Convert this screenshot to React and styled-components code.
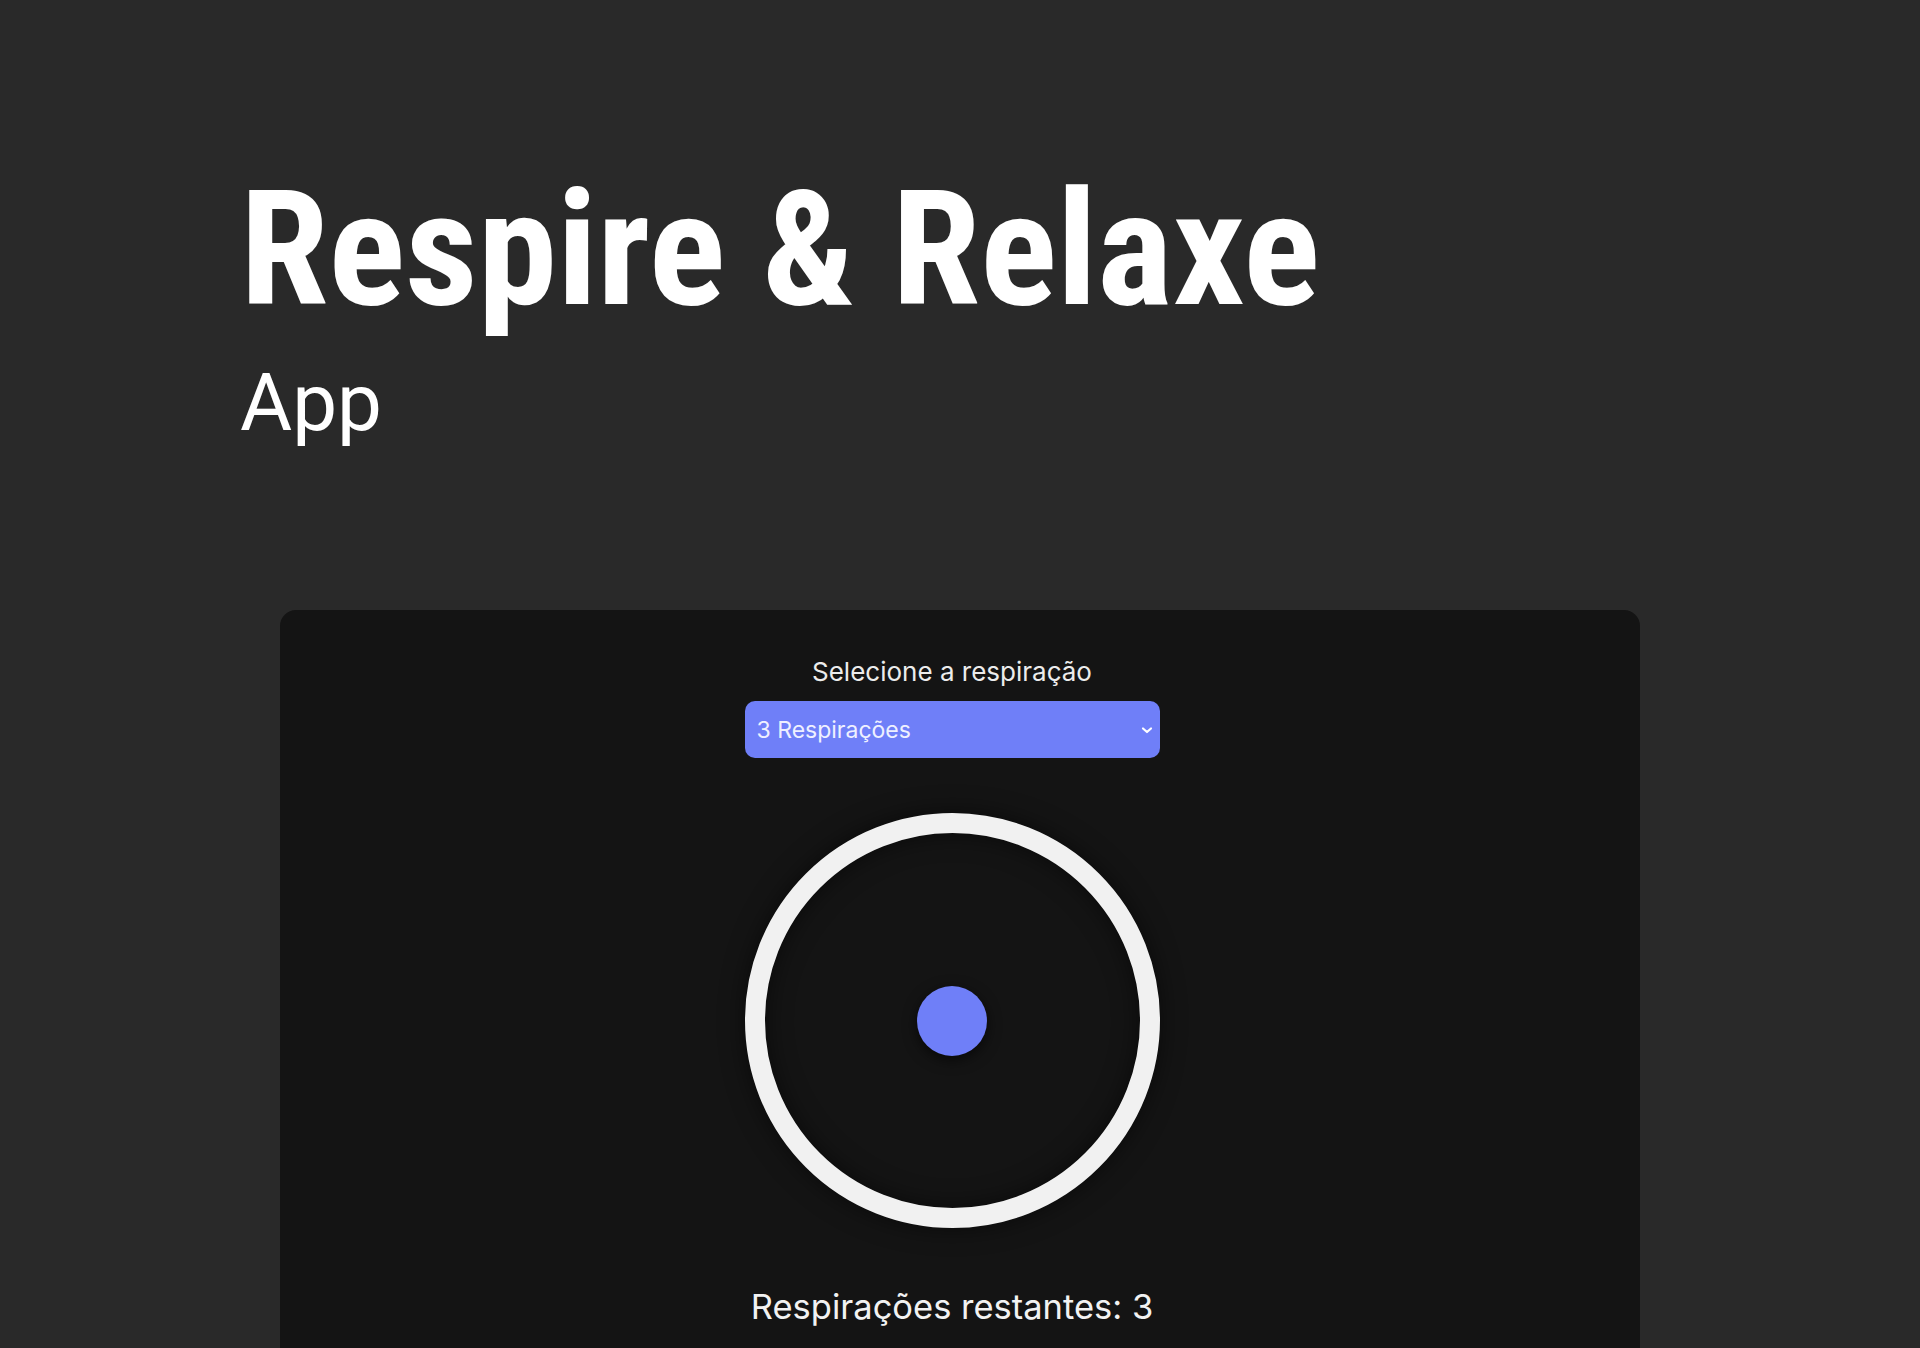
import React from "react";
import styled, { createGlobalStyle } from "styled-components";

const Global = createGlobalStyle`
  html, body {
    margin: 0;
    padding: 0;
    background: #292929;
    height: 100%;
    overflow: hidden;
  }
  * { box-sizing: border-box; }
`;

const Page = styled.div`
  min-height: 1348px;
  background: #292929;
  display: flex;
  flex-direction: column;
`;

const Header = styled.header`
  padding: 170px 0 0 240px;
  display: flex;
  flex-direction: column;
`;

const Title = styled.h1`
  margin: 0;
  font-family: "Roboto Condensed", "Liberation Sans Narrow", "DejaVu Sans Condensed", Roboto, sans-serif;
  font-weight: 700;
  font-size: 160px;
  line-height: 1;
  color: #ffffff;
`;

const Subtitle = styled.h2`
  margin: 33px 0 0 0;
  font-family: Roboto, "Liberation Sans", sans-serif;
  font-weight: 400;
  font-size: 80px;
  line-height: 1;
  color: #ffffff;
`;

const Card = styled.main`
  margin: 167px 280px 0 280px;
  flex: 1;
  background: #141414;
  border-radius: 16px 16px 0 0;
  padding: 46px 16px 60px 0;
  display: flex;
  flex-direction: column;
  align-items: center;
  font-family: Inter, "Noto Sans", sans-serif;
`;

const Label = styled.label`
  font-size: 26px;
  color: #ececec;
  line-height: 1.21;
`;

const SelectWrap = styled.div`
  position: relative;
  margin-top: 14px;
  width: 415px;
  height: 57px;
`;

const Select = styled.select`
  appearance: none;
  -webkit-appearance: none;
  width: 100%;
  height: 100%;
  border: none;
  outline: none;
  border-radius: 10px;
  background: #6f7ff8;
  color: #eef0ff;
  font-family: Inter, "Noto Sans", sans-serif;
  font-size: 23px;
  padding: 0 40px 0 12px;
  cursor: pointer;
`;

const Chevron = styled.svg`
  position: absolute;
  right: 7px;
  top: 50%;
  transform: translateY(-50%);
  width: 12px;
  height: 12px;
  pointer-events: none;
`;

const Ring = styled.div`
  margin-top: 55px;
  width: 415px;
  height: 415px;
  border-radius: 50%;
  border: 20px solid #f1f1f1;
  box-shadow: 0 0 24px rgba(0, 0, 0, 0.55), inset 0 0 24px rgba(0, 0, 0, 0.55);
  display: flex;
  align-items: center;
  justify-content: center;
`;

const Dot = styled.div`
  width: 70px;
  height: 70px;
  border-radius: 50%;
  background: #6f7ff8;
  box-shadow: 0 4px 14px rgba(0, 0, 0, 0.6);
`;

const Remaining = styled.p`
  margin: 58px 0 0 0;
  font-size: 34.5px;
  line-height: 1.21;
  color: #f2f2f2;
`;

export default function App() {
  return (
    <>
      <Global />
      <Page>
        <Header>
          <Title>Respire &amp; Relaxe</Title>
          <Subtitle>App</Subtitle>
        </Header>
        <Card>
          <Label htmlFor="breaths">Selecione a respiração</Label>
          <SelectWrap>
            <Select id="breaths" defaultValue="3">
              <option value="3">3 Respirações</option>
              <option value="5">5 Respirações</option>
              <option value="7">7 Respirações</option>
            </Select>
            <Chevron viewBox="0 0 12 12" fill="none">
              <path d="M2 4.5 L6 8 L10 4.5" stroke="#ffffff" strokeWidth="2.2" strokeLinecap="round" strokeLinejoin="round" />
            </Chevron>
          </SelectWrap>
          <Ring>
            <Dot />
          </Ring>
          <Remaining>Respirações restantes: 3</Remaining>
        </Card>
      </Page>
    </>
  );
}
